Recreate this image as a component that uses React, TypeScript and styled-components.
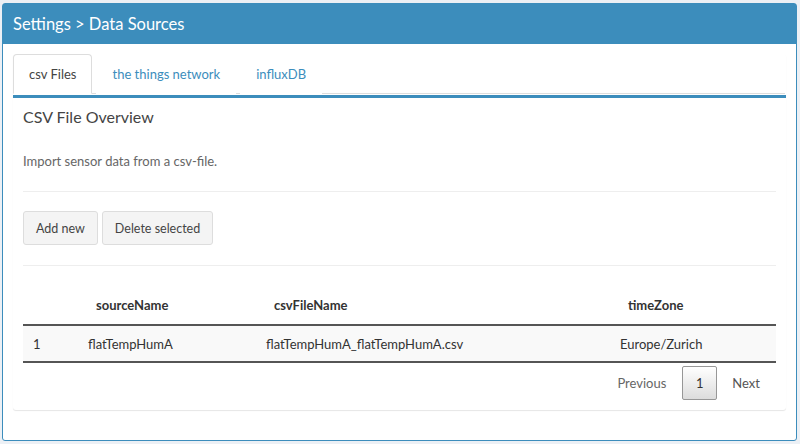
import styled, { createGlobalStyle } from "styled-components";

const GlobalStyle = createGlobalStyle`
  html, body {
    margin: 0;
    padding: 0;
    background: #ecf0f5;
    font-family: Lato, "Liberation Sans", sans-serif;
    font-size: 13px;
    color: #333;
  }
`;

const Page = styled.div`
  padding: 3px 3px 3px 2px;
  height: 444px;
  box-sizing: border-box;
`;

const Box = styled.div`
  height: 438px;
  box-sizing: border-box;
  background: #fff;
  border: 1px solid #3c8dbc;
  border-radius: 3px;
  display: flex;
  flex-direction: column;
`;

const BoxHeader = styled.div`
  background: #3c8dbc;
  color: #fff;
  height: 40px;
  display: flex;
  align-items: center;
  padding-left: 10px;
  font-size: 16.5px;
`;

const BoxBody = styled.div`
  padding: 10px;
`;

const TabsPanel = styled.div`
  background: #fff;
  border-radius: 3px;
  box-shadow: 0 1px 1px rgba(0, 0, 0, 0.1);
`;

const TabList = styled.div`
  display: flex;
  gap: 4px;
  border-bottom: 1px solid #ddd;
  margin-right: 1px;
`;

const Tab = styled.div<{ $active?: boolean }>`
  height: 40px;
  box-sizing: border-box;
  padding: 0 15px;
  display: flex;
  align-items: center;
  margin-bottom: -1px;
  border: 1px solid ${(p) => (p.$active ? "#ddd" : "transparent")};
  border-bottom-color: transparent;
  border-radius: 4px 4px 0 0;
  background: #fff;
  color: ${(p) => (p.$active ? "#444" : "#3c8dbc")};
  font-size: 13px;
`;

const TabContent = styled.div`
  border-top: 3px solid #3c8dbc;
  margin-top: 1px;
  padding: 6px 10px 10px;
`;

const Title = styled.h3`
  margin: 0;
  font-size: 16px;
  font-weight: normal;
  color: #444;
  line-height: 26px;
`;

const Lead = styled.p`
  margin: 21px 0 0;
  color: #666;
  font-size: 13px;
  line-height: 20px;
`;

const Rule = styled.hr`
  border: 0;
  border-top: 1px solid #eee;
  margin: 20px 0 19px;
`;

const ButtonRow = styled.div`
  display: flex;
  gap: 4px;
`;

const Button = styled.button`
  height: 34px;
  padding: 0 12px;
  background: #f4f4f4;
  border: 1px solid #ddd;
  border-radius: 3px;
  color: #444;
  font-family: inherit;
  font-size: 12.5px;
`;

const TableGrid = styled.div`
  display: grid;
  grid-template-columns: 55px 178px 354px 1fr;
  margin-top: 20px;
`;

const HeadCell = styled.div`
  font-weight: bold;
  color: #333;
  padding: 0 8px 0 18px;
  height: 38px;
  display: flex;
  align-items: center;
  border-bottom: 2px solid #555;
`;

const BodyCell = styled.div`
  background: #f9f9f9;
  color: #333;
  padding: 0 10px;
  height: 35px;
  display: flex;
  align-items: center;
  border-bottom: 2px solid #555;
`;

const Pager = styled.div`
  display: flex;
  justify-content: flex-end;
  align-items: center;
  padding: 3px 0 0;
`;

const PageLink = styled.span<{ $disabled?: boolean }>`
  color: ${(p) => (p.$disabled ? "#666" : "#555")};
  padding: 0 16px 0 15px;
`;

const PageCurrent = styled.span`
  width: 35px;
  height: 34px;
  box-sizing: border-box;
  display: flex;
  align-items: center;
  justify-content: center;
  border: 1px solid #979797;
  border-radius: 2px;
  background: linear-gradient(to bottom, #fff 0%, #dcdcdc 100%);
  color: #333;
`;

const columns = ["", "sourceName", "csvFileName", "timeZone"];
const rows = [["1", "flatTempHumA", "flatTempHumA_flatTempHumA.csv", "Europe/Zurich"]];

export default function App() {
  return (
    <>
      <GlobalStyle />
      <Page>
        <Box>
          <BoxHeader>Settings &gt; Data Sources</BoxHeader>
          <BoxBody>
            <TabsPanel>
              <TabList>
                <Tab $active>csv Files</Tab>
                <Tab>the things network</Tab>
                <Tab>influxDB</Tab>
              </TabList>
              <TabContent>
                <Title>CSV File Overview</Title>
                <Lead>Import sensor data from a csv-file.</Lead>
                <Rule />
                <ButtonRow>
                  <Button>Add new</Button>
                  <Button>Delete selected</Button>
                </ButtonRow>
                <Rule />
                <TableGrid>
                  {columns.map((c, i) => (
                    <HeadCell key={i}>{c}</HeadCell>
                  ))}
                  {rows.map((r) =>
                    r.map((v, i) => <BodyCell key={i}>{v}</BodyCell>)
                  )}
                </TableGrid>
                <Pager>
                  <PageLink $disabled>Previous</PageLink>
                  <PageCurrent>1</PageCurrent>
                  <PageLink>Next</PageLink>
                </Pager>
              </TabContent>
            </TabsPanel>
          </BoxBody>
        </Box>
      </Page>
    </>
  );
}
